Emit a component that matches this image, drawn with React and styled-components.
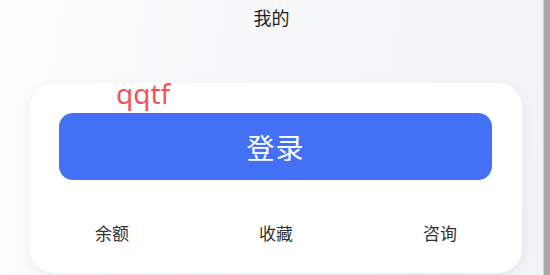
import React from "react";
import styled, { createGlobalStyle } from "styled-components";

const GlobalStyle = createGlobalStyle`
  html, body {
    margin: 0;
    padding: 0;
    height: 275px;
    overflow: hidden;
  }
  body {
    font-family: "Noto Sans", "Noto Sans CJK SC", sans-serif;
  }
`;

const Page = styled.div`
  display: flex;
  width: 550px;
  height: 275px;
`;

const Main = styled.div`
  flex: 1;
  background: linear-gradient(100deg, #fdfdfd 0%, #f6f7f9 55%, #f2f3f6 100%);
  display: flex;
  flex-direction: column;
`;

const ScrollStrip = styled.div`
  width: 6px;
  background: #a9a9a9;
  border-left: 1px solid #d4d4d4;
`;

const Title = styled.h1`
  margin: 0;
  height: 36px;
  line-height: 36px;
  text-align: center;
  font-size: 18px;
  font-weight: 400;
  color: #222;
`;

const Card = styled.div`
  position: relative;
  margin: 47px 0 0 30px;
  width: 492px;
  height: 190px;
  box-sizing: border-box;
  background: #fff;
  border-radius: 24px;
  box-shadow: 0 4px 14px rgba(0, 0, 0, 0.06);
  padding: 30px 30px 0 29px;
  display: flex;
  flex-direction: column;
`;

const Nick = styled.span`
  position: absolute;
  left: 86px;
  top: -8px;
  font-size: 28px;
  line-height: 36px;
  color: #f4525a;
`;

const LoginButton = styled.button`
  height: 67px;
  border: none;
  border-radius: 14px;
  background: #4470f6;
  color: #fff;
  font-family: inherit;
  font-size: 28px;
  letter-spacing: 1px;
  cursor: pointer;
`;

const Shortcuts = styled.div`
  display: grid;
  grid-template-columns: repeat(3, 1fr);
  margin: 44px -30px 0 -29px;
`;

const Shortcut = styled.div`
  text-align: center;
  font-size: 17px;
  line-height: 20px;
  color: #333;
`;

export default function App() {
  return (
    <>
      <GlobalStyle />
      <Page>
        <Main>
          <Title>我的</Title>
          <Card>
            <Nick>qqtf</Nick>
            <LoginButton>登录</LoginButton>
            <Shortcuts>
              {["余额", "收藏", "咨询"].map((t) => (
                <Shortcut key={t}>{t}</Shortcut>
              ))}
            </Shortcuts>
          </Card>
        </Main>
        <ScrollStrip />
      </Page>
    </>
  );
}
